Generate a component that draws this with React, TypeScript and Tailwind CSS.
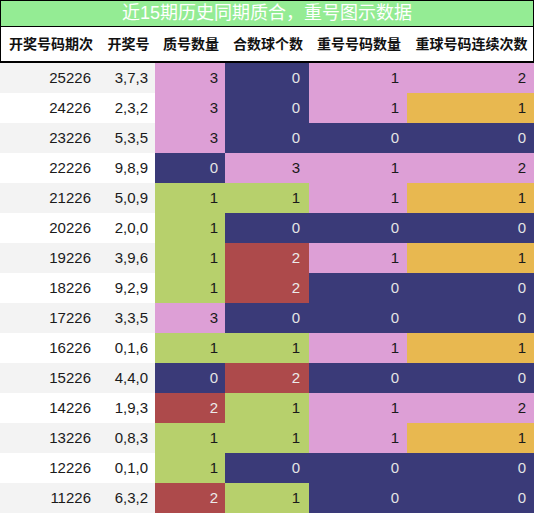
import React from 'react';

type Row = [string, string, number, number, number, number];

const rows: Row[] = [
  ['25226', '3,7,3', 3, 0, 1, 2],
  ['24226', '2,3,2', 3, 0, 1, 1],
  ['23226', '5,3,5', 3, 0, 0, 0],
  ['22226', '9,8,9', 0, 3, 1, 2],
  ['21226', '5,0,9', 1, 1, 1, 1],
  ['20226', '2,0,0', 1, 0, 0, 0],
  ['19226', '3,9,6', 1, 2, 1, 1],
  ['18226', '9,2,9', 1, 2, 0, 0],
  ['17226', '3,3,5', 3, 0, 0, 0],
  ['16226', '0,1,6', 1, 1, 1, 1],
  ['15226', '4,4,0', 0, 2, 0, 0],
  ['14226', '1,9,3', 2, 1, 1, 2],
  ['13226', '0,8,3', 1, 1, 1, 1],
  ['12226', '0,1,0', 1, 0, 0, 0],
  ['11226', '6,3,2', 2, 1, 0, 0],
];

const NAVY = 'bg-[#3a3a78] text-[#e4e4e4]';
const GREEN = 'bg-[#b7d06c] text-[#1a1a1a]';
const RED = 'bg-[#ad4a4b] text-[#ececec]';
const PINK = 'bg-[#dd9fd6] text-[#1a1a1a]';
const ORANGE = 'bg-[#e8b850] text-[#1a1a1a]';

// 质号 / 合数 columns
const countCls = (v: number) => (v === 0 ? NAVY : v === 1 ? GREEN : v === 2 ? RED : PINK);
// 重号号码数量
const repeatCls = (v: number) => (v === 0 ? NAVY : PINK);
// 重球号码连续次数
const streakCls = (v: number) => (v === 0 ? NAVY : v === 1 ? ORANGE : PINK);

const headers = ['开奖号码期次', '开奖号', '质号数量', '合数球个数', '重号号码数量', '重球号码连续次数'];
const cols = 'grid grid-cols-[100px_55px_70px_84px_98px_127px]';

export default function App() {
  return (
    <div className="w-[534px] h-[514px] bg-white overflow-hidden font-['Liberation_Sans','Noto_Sans_CJK_SC',sans-serif]">
      <div className="h-[27px] border border-black bg-[#94ec94] text-white text-[18px] leading-[25px] text-center">
        近15期历史同期质合，重号图示数据
      </div>
      <div className={`${cols} h-[36px] border-x border-b-2 border-black items-center text-[14px] font-bold text-[#111]`}>
        {headers.map((h) => (
          <div key={h} className="text-center whitespace-nowrap">
            {h}
          </div>
        ))}
      </div>
      {rows.map((r, i) => (
        <div key={r[0]} className={`${cols} h-[30px] text-[15px] leading-[30px] ${i % 2 === 0 ? 'bg-[#f3f3f3]' : 'bg-white'}`}>
          <div className="text-right pr-[9px] text-[#1a1a1a]">{r[0]}</div>
          <div className="text-right pr-[7px] text-[#1a1a1a]">{r[1]}</div>
          <div className={`text-right pr-[7px] ${countCls(r[2])}`}>{r[2]}</div>
          <div className={`text-right pr-[9px] ${countCls(r[3])}`}>{r[3]}</div>
          <div className={`text-right pr-[8px] ${repeatCls(r[4])}`}>{r[4]}</div>
          <div className={`text-right pr-[8px] ${streakCls(r[5])}`}>{r[5]}</div>
        </div>
      ))}
    </div>
  );
}
